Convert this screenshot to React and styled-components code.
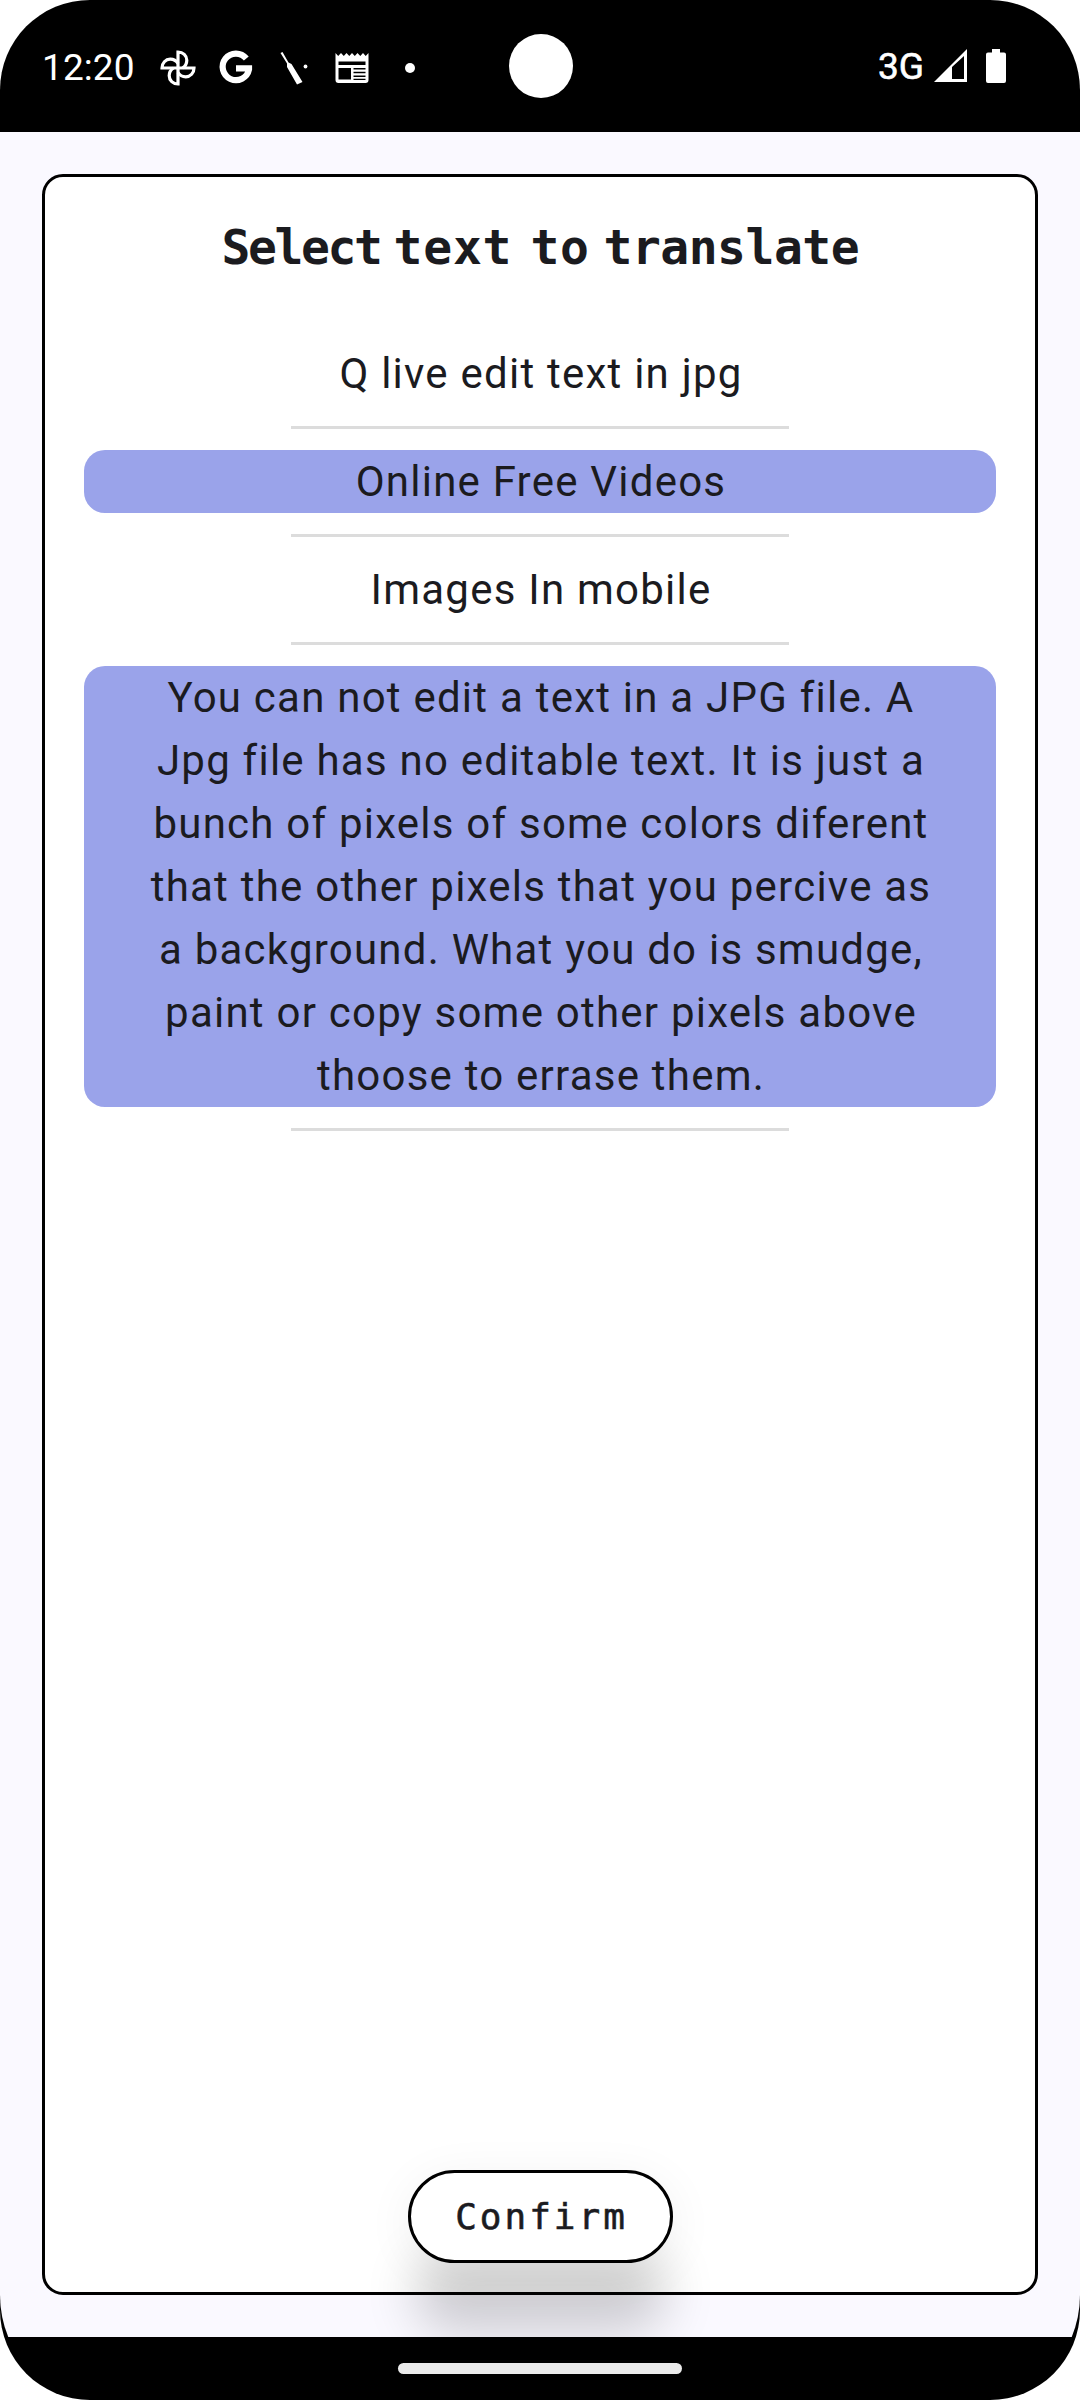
import React from 'react';
import styled, { createGlobalStyle } from 'styled-components';

const GlobalStyle = createGlobalStyle`
  *, *::before, *::after { box-sizing: border-box; }
  html, body { margin: 0; background: #fff; }
`;

const Device = styled.div`
  width: 1080px;
  height: 2400px;
  display: flex;
  flex-direction: column;
  background: #000;
  border-radius: 90px;
  overflow: hidden;
  font-family: Roboto, 'Liberation Sans', sans-serif;
  color: #1b1b1f;
`;

const StatusBar = styled.header`
  flex: none;
  height: 132px;
  display: grid;
  grid-template-columns: 1fr 64px 1fr;
  align-items: center;
  color: #fff;
`;

const StatusLeft = styled.div`
  display: flex;
  align-items: center;
  padding-left: 42px;
  padding-top: 3px;
`;

const Clock = styled.span`
  width: 116px;
  font-size: 37px;
  line-height: 44px;
  letter-spacing: 0.1px;
`;

const StatusIcon = styled.svg`
  flex: none;
  display: block;
  width: 40px;
  height: 40px;
  margin-right: ${(p) => p.$gap || 18}px;
`;

const Camera = styled.div`
  width: 64px;
  height: 64px;
  margin: -1px 0 0 1px;
  border-radius: 50%;
  background: #fff;
`;

const StatusRight = styled.div`
  display: flex;
  align-items: center;
  justify-content: flex-end;
  padding-right: 74px;
`;

const Network = styled.span`
  font-size: 37px;
  line-height: 44px;
  padding-top: 2px;
  margin-right: 10px;
  -webkit-text-stroke: 0.6px #fff;
`;

const Screen = styled.main`
  flex: none;
  height: 2205px;
  display: flex;
  padding: 42px;
  background: #faf9ff;
  overflow: hidden;
  clip-path: inset(0 0 -70px 0 round 0 0 112px 112px);
`;

const Card = styled.section`
  flex: 1;
  display: flex;
  flex-direction: column;
  align-items: center;
  padding: 39px 39px 29px;
  border: 3px solid #000;
  border-radius: 21px;
  background: #fff;
`;

const Title = styled.h1`
  display: flex;
  width: 640px;
  height: 63px;
  margin: 0 0 0 3px;
  font: bold 48px/63px 'DejaVu Sans Mono', monospace;
`;

const Word = styled.span`
  flex: none;
  width: ${(p) => p.$width}px;
  letter-spacing: ${(p) => p.$spacing}px;
  white-space: pre;
`;

const List = styled.ul`
  width: 100%;
  margin: 63px 0 0;
  padding: 0;
  list-style: none;
`;

const Item = styled.li`
  display: flex;
  flex-direction: column;
  align-items: center;
  gap: 21px;
  margin-bottom: 21px;
`;

const Phrase = styled.div`
  width: 100%;
  padding: 0 60px 0 62px;
  border-radius: 21px;
  background: ${(p) => (p.$selected ? '#9aa3ea' : 'transparent')};
  font-size: 42px;
  line-height: 63px;
  letter-spacing: 1.23px;
  text-align: center;
`;

const Divider = styled.div`
  width: 498px;
  height: 3px;
  background: #dcdcdc;
`;

const ConfirmButton = styled.button`
  width: 265px;
  height: 93px;
  margin: auto 0 0;
  padding: 0 0 0 3px;
  border: 3px solid #000;
  border-radius: 47px;
  background: #fff;
  color: #1b1b1f;
  font: 36px/87px 'DejaVu Sans Mono', monospace;
  letter-spacing: 3px;
  text-align: center;
  -webkit-text-stroke: 0.6px #1b1b1f;
  box-shadow: 0 76px 50px -6px rgba(0, 0, 0, 0.18), 0 8px 50px rgba(0, 0, 0, 0.06);
`;

const NavBar = styled.footer`
  flex: 1;
  display: flex;
  justify-content: center;
  padding-top: 26px;
`;

const Handle = styled.div`
  width: 284px;
  height: 11px;
  border-radius: 6px;
  background: #ebebeb;
`;

const titleWords = [
  { text: 'Select', width: 172, spacing: -2.4 },
  { text: 'text', width: 137, spacing: 0.8 },
  { text: 'to', width: 73, spacing: 0.5 },
  { text: 'translate', width: 258, spacing: -0.5 },
];

const phrases = [
  { text: 'Q live edit text in jpg' },
  { text: 'Online Free Videos', selected: true },
  { text: 'Images In mobile' },
  {
    text: 'You can not edit a text in a JPG file. A Jpg file has no editable text. It is just a bunch of pixels of some colors diferent that the other pixels that you percive as a background. What you do is smudge, paint or copy some other pixels above thoose to errase them.',
    selected: true,
  },
];

const PhotosIcon = () => (
  <StatusIcon viewBox="0 0 40 40" fill="none" stroke="#fff" strokeWidth="3.200">
    {[0, 90, 180, 270].map((a) => (
      <path key={a} transform={`rotate(${a} 20 20)`} d="M20 20V4C25 4 28.800 7.600 28.800 12.200C28.800 15.500 27 18.500 24.500 20" />
    ))}
  </StatusIcon>
);

const GoogleIcon = () => (
  <StatusIcon viewBox="0 0 40 40" fill="none" stroke="#fff" strokeWidth="6.200">
    <path d="M30.300 10.500A13.300 13.300 0 1 0 33 21.500V20.300H20" />
  </StatusIcon>
);

const WandIcon = () => (
  <StatusIcon viewBox="0 0 40 40" fill="#fff">
    <path d="M6.500 5L8.500 4L14.500 14.500L17.500 16L28.500 34L23 36.500L13 19V15.500Z" />
    <circle cx="31.500" cy="18.500" r="1.900" />
  </StatusIcon>
);

const NewsIcon = () => (
  <StatusIcon viewBox="0 0 40 40" fill="#fff" $gap={33}>
    <path
      fillRule="evenodd"
      d="M3.500 5L6.200 8L9 5L11.800 8L14.500 5L17.300 8L20 5L22.800 8L25.500 5L28.300 8L31 5L33.700 8L36.500 5V32Q36.500 35 33.500 35H6.500Q3.500 35 3.500 32ZM6.500 13.500V17H33.500V13.500ZM6.500 20V31.500H19V20ZM21.500 20V21.500H33.500V20ZM21.500 23.800V25.300H33.500V23.800ZM21.500 27.500V29H33.500V27.500ZM21.500 30.800V32H33.500V30.800Z"
    />
  </StatusIcon>
);

const Dot = styled.span`
  width: 10px;
  height: 10px;
  border-radius: 50%;
  background: #fff;
`;

const SignalGlyph = styled.svg`
  display: block;
  width: 34px;
  height: 38px;
  margin-right: 18px;
`;

const BatteryGlyph = styled.svg`
  display: block;
  width: 20px;
  height: 34px;
`;

export default function App() {
  return (
    <>
      <GlobalStyle />
      <Device>
        <StatusBar>
          <StatusLeft>
            <Clock>12:20</Clock>
            <PhotosIcon />
            <GoogleIcon />
            <WandIcon />
            <NewsIcon />
            <Dot />
          </StatusLeft>
          <Camera />
          <StatusRight>
            <Network>3G</Network>
            <SignalGlyph viewBox="0 0 34 38" fill="#fff">
              <path fillRule="evenodd" d="M0 35L33 2V35ZM18 20V32H30V9Z" />
            </SignalGlyph>
            <BatteryGlyph viewBox="0 0 20 34" fill="#fff">
              <path d="M6 0H14V3.500H18Q20 3.500 20 5.500V32Q20 34 18 34H2Q0 34 0 32V5.500Q0 3.500 2 3.500H6Z" />
            </BatteryGlyph>
          </StatusRight>
        </StatusBar>
        <Screen>
          <Card>
            <Title>
              {titleWords.map((w) => (
                <Word key={w.text} $width={w.width} $spacing={w.spacing}>{w.text} </Word>
              ))}
            </Title>
            <List>
              {phrases.map((p) => (
                <Item key={p.text}>
                  <Phrase $selected={p.selected}>{p.text}</Phrase>
                  <Divider />
                </Item>
              ))}
            </List>
            <ConfirmButton>Confirm</ConfirmButton>
          </Card>
        </Screen>
        <NavBar>
          <Handle />
        </NavBar>
      </Device>
    </>
  );
}
